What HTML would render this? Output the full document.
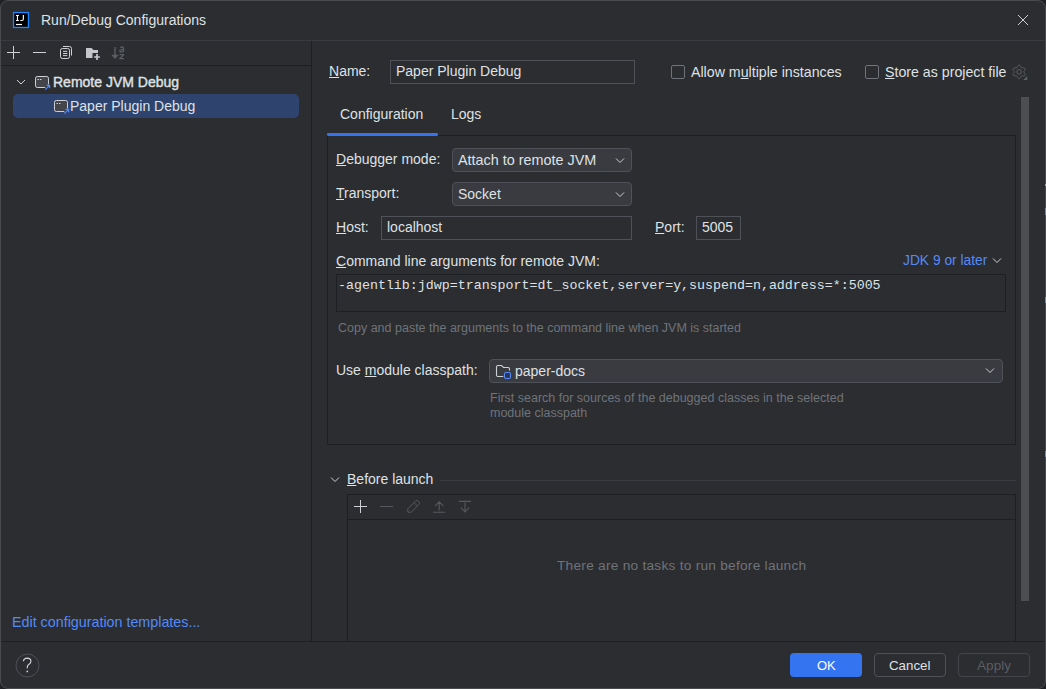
<!DOCTYPE html>
<html><head><meta charset="utf-8">
<style>
*{margin:0;padding:0;box-sizing:border-box}
html,body{width:1046px;height:689px;overflow:hidden;background:#202124}
body{font-family:"Liberation Sans",sans-serif;font-size:14px;color:#dfe1e5;position:relative}
#win{position:absolute;left:0;top:0;width:1046px;height:689px;background:#2b2d30;border:1px solid #4a4b4e;border-radius:8px}
.a{position:absolute;white-space:pre}
.t{line-height:16px;height:16px}
.hl{position:absolute;height:1px;background:#1e1f22}
.vl{position:absolute;width:1px;background:#1e1f22}
.box{position:absolute;border:1px solid #4e5157}
.grey{color:#6f737a}
.link{color:#548af7}
u{text-decoration:underline;text-underline-offset:1px;text-decoration-thickness:1px}
svg{position:absolute;overflow:visible}
</style></head><body>
<div id="win"></div>

<!-- ===== title bar ===== -->
<svg style="left:12px;top:11px" width="18" height="18" viewBox="0 0 18 18">
  <rect x="1.55" y="1.55" width="14.9" height="14.9" fill="#000" stroke="#1e86ff" stroke-width="1.3"/>
  <path d="M4 4.5H6.9M5.45 4.5V9.5M4 9.5H6.9" stroke="#fff" stroke-width="1.1" fill="none"/>
  <path d="M11.35 4V8Q11.35 9.5 9.85 9.5H8.3" stroke="#fff" stroke-width="1.15" fill="none"/>
  <path d="M4 13.5H10" stroke="#fff" stroke-width="1.2"/>
</svg>
<div class="a t" style="left:41px;top:12px">Run/Debug Configurations</div>
<svg style="left:1016px;top:14px" width="14" height="14" viewBox="0 0 14 14">
  <path d="M2 1L12 11M12 1L2 11" stroke="#ced0d6" stroke-width="1" fill="none"/>
</svg>
<div class="hl" style="left:1px;top:40px;width:1044px;background:#393b40"></div>

<!-- ===== left panel ===== -->
<svg style="left:0;top:40px" width="130" height="25" viewBox="0 0 130 25">
  <path d="M7 12.5h13M13.5 6v13" stroke="#ced0d6" stroke-width="1" fill="none"/>
  <path d="M33 12.5h13" stroke="#ced0d6" stroke-width="1" fill="none"/>
  <rect x="60.5" y="8.5" width="9" height="10" rx="1.8" fill="none" stroke="#ced0d6" stroke-width="1"/>
  <path d="M63 6.5h6.5q2 0 2 2v7" stroke="#ced0d6" stroke-width="1" fill="none"/>
  <path d="M63 11.3h4.3M63 13.5h4.3M63 15.6h4.3" stroke="#ced0d6" stroke-width="1" fill="none"/>
  <path d="M86 8h5.5l2 2H98v3h-5.5V18H86z" fill="#c4c6cb"/>
  <path d="M94.1 17h5.8M97 14.1v5.8" stroke="#c4c6cb" stroke-width="1.7" fill="none"/>
  <path d="M115 7v9" stroke="#5a5d62" stroke-width="1.4" fill="none"/>
  <path d="M111.2 14.8h7.6L115 19z" fill="#5a5d62"/>
  <path d="M120.2 7.5Q121 7 122 7Q123.6 7 123.6 8.5V12M123.6 9.6H121.8Q119.8 9.6 119.8 10.8Q119.8 12 121.2 12Q122.8 12 123.6 10.8" stroke="#5a5d62" stroke-width="1.3" fill="none"/>
  <path d="M119.7 14.7H123.8L119.7 18.6H124" stroke="#5a5d62" stroke-width="1.2" fill="none" stroke-linejoin="round"/>
</svg>
<div class="hl" style="left:1px;top:65px;width:310px"></div>
<div class="vl" style="left:311px;top:41px;height:600px"></div>

<svg style="left:16px;top:78px" width="10" height="8" viewBox="0 0 10 8">
  <path d="M1 2l4 4 4-4" stroke="#ced0d6" stroke-width="1" fill="none"/>
</svg>
<svg style="left:34px;top:75px" width="18" height="16" viewBox="0 0 18 16">
  <rect x="1.5" y="1.5" width="13" height="11" rx="1.8" fill="#43454a" stroke="#ced0d6" stroke-width="1"/>
  <path d="M3.5 4.5h1.5M6 4.5h1.5" stroke="#ced0d6" stroke-width="1"/>
  <path d="M11.3 14.6l4.3-4.3" stroke="#2b2d30" stroke-width="3" fill="none"/>
  <path d="M11.3 14.6l4.3-4.3M12.6 10.3h3v3" stroke="#548af7" stroke-width="1.2" fill="none"/>
</svg>
<div class="a t" style="left:53px;top:74px;font-size:14px;-webkit-text-stroke:0.4px #dfe1e5">Remote JVM Debug</div>

<div class="a" style="left:13px;top:94px;width:286px;height:24px;background:#2e436e;border-radius:5px"></div>
<svg style="left:53px;top:99px" width="18" height="16" viewBox="0 0 18 16">
  <rect x="1.5" y="1.5" width="13" height="11" rx="1.8" fill="#43454a" stroke="#ced0d6" stroke-width="1"/>
  <path d="M3.5 4.5h1.5M6 4.5h1.5" stroke="#ced0d6" stroke-width="1"/>
  <path d="M11.3 14.6l4.3-4.3" stroke="#2e436e" stroke-width="3" fill="none"/>
  <path d="M11.3 14.6l4.3-4.3M12.6 10.3h3v3" stroke="#548af7" stroke-width="1.2" fill="none"/>
</svg>
<div class="a t" style="left:70px;top:98px">Paper Plugin Debug</div>

<div class="a t link" style="left:12px;top:614px;font-size:14.3px">Edit configuration templates...</div>

<!-- ===== bottom bar ===== -->
<div class="hl" style="left:1px;top:641px;width:1044px"></div>
<svg style="left:14px;top:652px" width="28" height="28" viewBox="0 0 28 28">
  <circle cx="13.5" cy="13.5" r="11.5" fill="none" stroke="#4e5157" stroke-width="1"/>
  <path d="M9.4 9.3Q9.8 6.1 13.2 6.1Q16.9 6.2 16.9 9.2Q16.9 11 15 12.3Q13.3 13.4 13.3 15.2V16.3" fill="none" stroke="#ced0d6" stroke-width="1.2"/>
  <circle cx="13.3" cy="19.4" r="0.85" fill="#ced0d6"/>
</svg>
<div class="a" style="left:790px;top:653px;width:72px;height:24px;background:#3574f0;border-radius:4px"></div>
<div class="a t" style="left:817px;top:658px;font-size:13px;color:#fff">OK</div>
<div class="box" style="left:874px;top:653px;width:72px;height:24px;border-radius:4px"></div>
<div class="a t" style="left:889px;top:658px;font-size:13.3px">Cancel</div>
<div class="box" style="left:958px;top:653px;width:72px;height:24px;border-color:#43454a;border-radius:4px"></div>
<div class="a t" style="left:977px;top:658px;font-size:13.6px;color:#5a5d63">Apply</div>

<!-- ===== right panel top ===== -->
<div class="a t" style="left:329px;top:63px"><u>N</u>ame:</div>
<div class="box" style="left:390px;top:60px;width:245px;height:24px"></div>
<div class="a t" style="left:396px;top:63px">Paper Plugin Debug</div>
<div class="box" style="left:671px;top:65px;width:14px;height:14px;border-color:#6f737a;border-radius:2px"></div>
<div class="a t" style="left:691px;top:64px;font-size:14.2px">Allow m<u>u</u>ltiple instances</div>
<div class="box" style="left:865px;top:65px;width:14px;height:14px;border-color:#6f737a;border-radius:2px"></div>
<div class="a t" style="left:885px;top:64px;font-size:14.2px"><u>S</u>tore as project file</div>
<svg style="left:1011px;top:64px" width="18" height="18" viewBox="0 0 18 18">
  <path d="M12.85 7.85 L12.92 7.53 L13.10 7.19 L13.36 6.80 L13.65 6.36 L13.91 5.88 L14.07 5.38 L14.09 4.90 L13.95 4.47 L13.65 4.14 L13.22 3.92 L12.71 3.81 L12.17 3.78 L11.64 3.81 L11.17 3.85 L10.78 3.84 L10.47 3.74 L10.23 3.52 L10.03 3.19 L9.83 2.77 L9.59 2.30 L9.30 1.84 L8.94 1.45 L8.54 1.19 L8.10 1.10 L7.66 1.19 L7.26 1.45 L6.90 1.84 L6.61 2.30 L6.37 2.77 L6.17 3.19 L5.97 3.52 L5.73 3.74 L5.42 3.84 L5.03 3.85 L4.56 3.81 L4.03 3.78 L3.49 3.81 L2.98 3.92 L2.55 4.14 L2.25 4.47 L2.11 4.90 L2.13 5.38 L2.29 5.88 L2.55 6.36 L2.84 6.80 L3.10 7.19 L3.28 7.53 L3.35 7.85 L3.28 8.17 L3.10 8.51 L2.84 8.90 L2.55 9.34 L2.29 9.82 L2.13 10.32 L2.11 10.80 L2.25 11.22 L2.55 11.56 L2.98 11.78 L3.49 11.89 L4.03 11.92 L4.56 11.89 L5.03 11.85 L5.42 11.86 L5.72 11.96 L5.97 12.18 L6.17 12.51 L6.37 12.93 L6.61 13.40 L6.90 13.86 L7.26 14.25 L7.66 14.51 L8.10 14.60 L8.54 14.51 L8.94 14.25 L9.30 13.86 L9.59 13.40 L9.83 12.93 L10.03 12.51 L10.23 12.18 L10.47 11.96 L10.78 11.86 L11.17 11.85 L11.64 11.89 L12.17 11.92 L12.71 11.89 L13.22 11.78 L13.65 11.56 L13.95 11.23 L14.09 10.80 L14.07 10.32 L13.91 9.82 L13.65 9.34 L13.36 8.90 L13.10 8.51 L12.92 8.17Z" fill="none" stroke="#5e6166" stroke-width="1"/>
  <circle cx="8.1" cy="7.85" r="2.3" fill="none" stroke="#5e6166" stroke-width="1"/>
  <path d="M16.2 12v4h-4z" fill="#5e6166"/>
</svg>
<div class="a" style="left:1021px;top:97px;width:8px;height:504px;background:#4c4e52"></div>

<!-- tabs -->
<div class="a t" style="left:340px;top:106px">Configuration</div>
<div class="a t" style="left:451px;top:106px">Logs</div>
<div class="a" style="left:327px;top:133px;width:111px;height:3px;background:#3574f0;border-radius:2px"></div>
<div class="box" style="left:327px;top:135px;width:689px;height:310px;border-color:#1e1f22"></div>
<div class="a" style="left:327px;top:133px;width:111px;height:3px;background:#3574f0;border-radius:2px"></div>

<!-- config content -->
<div class="a t" style="left:336px;top:151px"><u>D</u>ebugger mode:</div>
<div class="box" style="left:452px;top:148px;width:180px;height:24px;background:#393b40;border-radius:4px"></div>
<div class="a t" style="left:458px;top:152px;font-size:14.4px">Attach to remote JVM</div>
<svg style="left:614px;top:157px" width="12" height="8" viewBox="0 0 12 8">
  <path d="M2 1.5l4 4 4-4" stroke="#ced0d6" stroke-width="1" fill="none"/>
</svg>
<div class="a t" style="left:336px;top:185px"><u>T</u>ransport:</div>
<div class="box" style="left:452px;top:182px;width:180px;height:24px;background:#393b40;border-radius:4px"></div>
<div class="a t" style="left:458px;top:186px">Socket</div>
<svg style="left:614px;top:191px" width="12" height="8" viewBox="0 0 12 8">
  <path d="M2 1.5l4 4 4-4" stroke="#ced0d6" stroke-width="1" fill="none"/>
</svg>
<div class="a t" style="left:336px;top:219px"><u>H</u>ost:</div>
<div class="box" style="left:381px;top:216px;width:251px;height:24px"></div>
<div class="a t" style="left:387px;top:219px">localhost</div>
<div class="a t" style="left:655px;top:219px"><u>P</u>ort:</div>
<div class="box" style="left:696px;top:216px;width:45px;height:24px"></div>
<div class="a t" style="left:702px;top:219px">5005</div>

<div class="a t" style="left:336px;top:253px"><u>C</u>ommand line arguments for remote JVM:</div>
<div class="a t link" style="left:903px;top:253px;font-size:13.8px">JDK 9 or later</div>
<svg style="left:991px;top:256px" width="12" height="8" viewBox="0 0 12 8">
  <path d="M2 2.5l4 4 4-4" stroke="#ced0d6" stroke-width="1" fill="none"/>
</svg>
<div class="box" style="left:336px;top:274px;width:670px;height:38px;border-color:#1e1f22"></div>
<div class="a t" style="left:338px;top:278px;font-family:'Liberation Mono',monospace;font-size:13.3px">-agentlib:jdwp=transport=dt_socket,server=y,suspend=n,address=*:5005</div>
<div class="a t grey" style="left:338px;top:320px;font-size:12.5px">Copy and paste the arguments to the command line when JVM is started</div>

<div class="a t" style="left:336px;top:362px">Use <u>m</u>odule classpath:</div>
<div class="box" style="left:489px;top:359px;width:514px;height:24px;background:#393b40;border-radius:4px"></div>
<svg style="left:494px;top:363px" width="20" height="18" viewBox="0 0 20 18">
  <path d="M9.3 13.5H4Q2.5 13.5 2.5 12V4Q2.5 2.5 4 2.5H7.5L9.5 4.5H14Q15.5 4.5 15.5 6V7.6" stroke="#ced0d6" stroke-width="1.1" fill="none"/>
  <rect x="10.5" y="9.5" width="6" height="6" rx="1.5" fill="#2b3557" stroke="#548af7" stroke-width="1.1"/>
</svg>
<div class="a t" style="left:515px;top:363px">paper-docs</div>
<svg style="left:984px;top:367px" width="12" height="8" viewBox="0 0 12 8">
  <path d="M2 1.5l4 4 4-4" stroke="#ced0d6" stroke-width="1" fill="none"/>
</svg>
<div class="a t grey" style="left:490px;top:390px;font-size:12.5px">First search for sources of the debugged classes in the selected</div>
<div class="a t grey" style="left:490px;top:405px;font-size:12.5px">module classpath</div>

<!-- before launch -->
<svg style="left:329px;top:474px" width="12" height="10" viewBox="0 0 12 10">
  <path d="M2 3.5l4 4 4-4" stroke="#ced0d6" stroke-width="1" fill="none"/>
</svg>
<div class="a t" style="left:347px;top:471px"><u>B</u>efore launch</div>
<div class="hl" style="left:440px;top:480px;width:576px;background:#393b40"></div>
<div class="box" style="left:347px;top:494px;width:669px;height:148px;border-color:#1e1f22"></div>
<div class="hl" style="left:348px;top:519px;width:667px"></div>
<svg style="left:347px;top:494px" width="140" height="25" viewBox="0 0 140 25">
  <path d="M7 12.5h13M13.5 6v13" stroke="#ced0d6" stroke-width="1" fill="none"/>
  <path d="M33 12.5h13" stroke="#55585d" stroke-width="1" fill="none"/>
  <path d="M60.8 18.2V14.8L68.8 6.8Q69.8 5.8 70.8 6.8L72.2 8.2Q73.2 9.2 72.2 10.2L64.2 18.2Z" stroke="#55585d" stroke-width="1" fill="none" stroke-linejoin="round"/>
  <path d="M67 8.6L70.4 12" stroke="#55585d" stroke-width="1" fill="none"/>
  <path d="M92.2 7.8V16.5M88 12.1l4.2-4.2 4.2 4.2M86.1 18.3h12.1" stroke="#55585d" stroke-width="1.1" fill="none"/>
  <path d="M118 8.5V17.8M113.8 13.7l4.2 4.2 4.2-4.2M112 7.4h12" stroke="#55585d" stroke-width="1.1" fill="none"/>
</svg>
<div class="a t grey" style="left:557px;top:558px;font-size:13.7px;letter-spacing:0.25px">There are no tasks to run before launch</div>
<div class="hl" style="left:1px;top:641px;width:1044px"></div>
<div class="a" style="left:1045px;top:184px;width:1px;height:2px;background:#9a9ca0"></div>
<div class="a" style="left:1045px;top:208px;width:1px;height:7px;background:#6b8cc7"></div>
<div class="a" style="left:1045px;top:297px;width:1px;height:6px;background:#6b8cc7"></div>
<div class="a" style="left:1045px;top:451px;width:1px;height:6px;background:#6b8cc7"></div>
</body></html>
